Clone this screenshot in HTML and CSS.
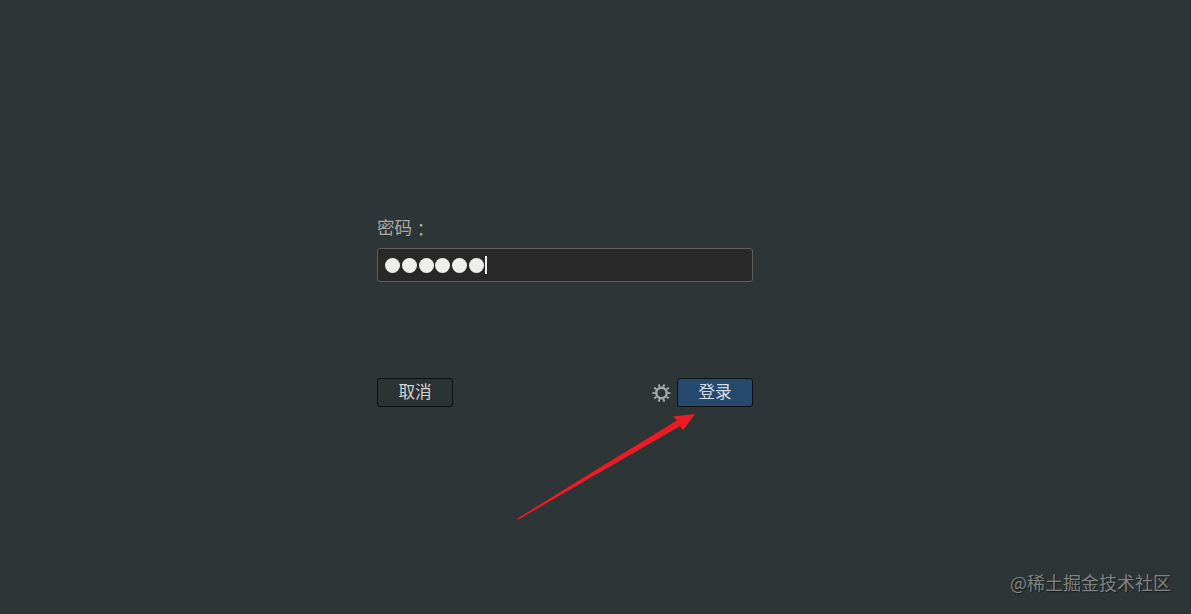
FILE: index.html
```
<!DOCTYPE html>
<html lang="zh-CN">
<head>
  <meta charset="UTF-8" />
  <meta name="viewport" content="width=device-width, initial-scale=1.0"/>
  <title>登录</title>
  <link rel="stylesheet" href="styles.css">
</head>
<body>
  <main class="login">
    <div class="label" id="password-label">密码<span class="colon" lang="zh-TW">：</span></div>
    <div class="password" role="textbox" aria-labelledby="password-label">
      <span class="dot"></span>
      <span class="dot"></span>
      <span class="dot"></span>
      <span class="dot"></span>
      <span class="dot"></span>
      <span class="dot"></span>
      <span class="caret"></span>
    </div>

    <div class="actions">
      <button class="btn" type="button">取消</button>
      <div class="actions-right">
        <svg class="gear" viewBox="-10.5 -10 20 20">
          <circle r="5.2" fill="none" stroke="#a9aaa6" stroke-width="2.4"/>
          <!-- 10 dientes -->
          <circle r="7.5" fill="none" stroke="#a9aaa6" stroke-width="3" pathLength="100" stroke-dasharray="4 6" stroke-dashoffset="2"/>
        </svg>
        <button class="btn btn-primary" type="button">登录</button>
      </div>
    </div>
  </main>

  <svg class="arrow" viewBox="0 0 180 108">
    <path d="M0.5 105.5 L74 60 L160.3 7.3 L156 3.5 L178 1 L166.2 17.2 L163 13.2 L76 63.3 L1.5 106.5 Z" fill="#ed1c24"/>
  </svg>

  <div class="watermark">@稀土掘金技术社区</div>
</body>
</html>
```

FILE: styles.css
```
* {
  box-sizing: border-box;
  margin: 0;
  padding: 0;
}

body {
  font-family: "Noto Sans CJK SC", "Noto Sans", sans-serif;
  background: #2e3536;
  height: 100vh;
  overflow: hidden;
}

.login {
  width: 376px;
  margin-left: 377px;
  padding-top: 213px;
}

.label {
  height: 35px;
  line-height: 28px;
  font-size: 17.6px;
  color: #a9aaa8;
}

.colon {
  font-family: "Noto Sans CJK TC", sans-serif;
  line-height: 1;
  vertical-align: -2px;
}

.password {
  display: flex;
  align-items: center;
  gap: 1.8px;
  height: 34px;
  padding-left: 7px;
  background: #282828;
  border: 1px solid #5f605e;
  border-radius: 3px;
}

.dot {
  width: 15px;
  height: 15px;
  border-radius: 50%;
  background: #eeeeec;
}

.caret {
  width: 2px;
  height: 18px;
  margin-left: -1px;
  background: #eeeeec;
}

.actions {
  display: flex;
  justify-content: space-between;
  margin-top: 96px;
}

.actions-right {
  display: flex;
  align-items: center;
  gap: 6px;
}

.btn {
  width: 76px;
  height: 29px;
  padding-bottom: 2px;
  font-family: inherit;
  font-size: 16.6px;
  line-height: 25px;
  color: #d3d5d2;
  background: #2c3335;
  border: 1px solid #0e1011;
  border-radius: 3px;
}

.btn-primary {
  color: #d5dde5;
  background: #264a6e;
}

.gear {
  width: 20px;
  height: 20px;
}

.arrow {
  position: absolute;
  left: 517px;
  top: 413px;
  width: 180px;
  height: 108px;
}

.watermark {
  position: absolute;
  right: 20px;
  bottom: 19px;
  font-size: 18px;
  line-height: 26px;
  color: #7f8384;
  text-shadow: 1px 1px 1px rgba(0, 0, 0, 0.5);
}
```
